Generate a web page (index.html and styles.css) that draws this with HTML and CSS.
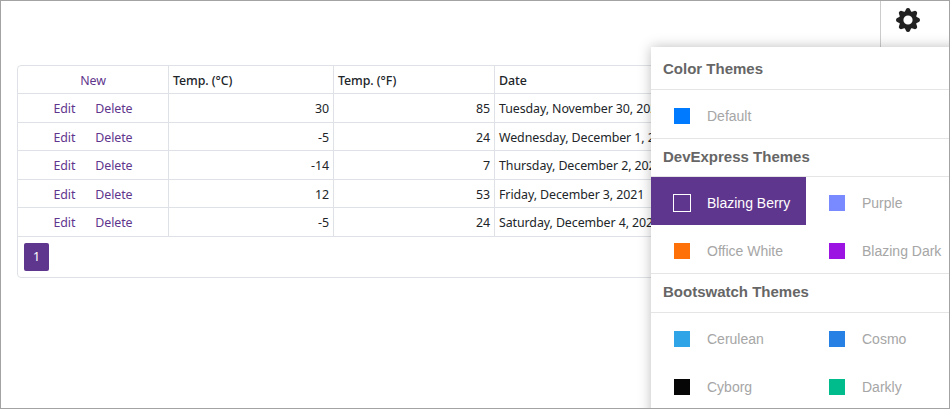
FILE: index.html
```html
<!DOCTYPE html>
<html lang="en">
<head>
<meta charset="utf-8">
<title>Weather forecast</title>
<link rel="stylesheet" href="styles.css">
</head>
<body>
<div class="frame">
  <header class="topbar">
    <button class="settings" aria-label="Themes">
      <svg width="24" height="24" viewBox="-12 -12 24 24">
        <g fill="#222">
          <path fill-rule="evenodd" d="M0-9A9 9 0 1 1 0 9A9 9 0 1 1 0-9ZM0-4.6A4.6 4.6 0 1 0 0 4.6A4.6 4.6 0 1 0 0-4.6Z"/>
          <path id="tooth" d="M-3.4-7.8L-2-10.8Q-1.5-12 0-12Q1.5-12 2-10.8L3.4-7.8Z"/>
          <use href="#tooth" transform="rotate(45)"/>
          <use href="#tooth" transform="rotate(90)"/>
          <use href="#tooth" transform="rotate(135)"/>
          <use href="#tooth" transform="rotate(180)"/>
          <use href="#tooth" transform="rotate(225)"/>
          <use href="#tooth" transform="rotate(270)"/>
          <use href="#tooth" transform="rotate(315)"/>
        </g>
      </svg>
    </button>
  </header>
  <main class="grid">
    <div class="row head"><div class="cmd"><a>New</a></div><div>Temp. (°C)</div><div>Temp. (°F)</div><div>Date</div></div>
    <div class="row"><div class="cmd"><a>Edit</a><a>Delete</a></div><div class="num">30</div><div class="num">85</div><div>Tuesday, November 30, 2021</div></div>
    <div class="row short"><div class="cmd"><a>Edit</a><a>Delete</a></div><div class="num">-5</div><div class="num">24</div><div>Wednesday, December 1, 2021</div></div>
    <div class="row"><div class="cmd"><a>Edit</a><a>Delete</a></div><div class="num">-14</div><div class="num">7</div><div>Thursday, December 2, 2021</div></div>
    <div class="row short"><div class="cmd"><a>Edit</a><a>Delete</a></div><div class="num">12</div><div class="num">53</div><div>Friday, December 3, 2021</div></div>
    <div class="row"><div class="cmd"><a>Edit</a><a>Delete</a></div><div class="num">-5</div><div class="num">24</div><div>Saturday, December 4, 2021</div></div>
    <div class="pager"><span class="page">1</span></div>
  </main>
  <aside class="themes">
    <h2 class="first">Color Themes</h2>
    <div class="list"><div class="item"><i class="swatch default"></i>Default</div></div>
    <h2>DevExpress Themes</h2>
    <div class="list">
      <div class="item selected"><i class="swatch berry"></i>Blazing Berry</div>
      <div class="item"><i class="swatch purple"></i>Purple</div>
      <div class="item"><i class="swatch office"></i>Office White</div>
      <div class="item"><i class="swatch dark"></i>Blazing Dark</div>
    </div>
    <h2 class="last">Bootswatch Themes</h2>
    <div class="list">
      <div class="item"><i class="swatch cerulean"></i>Cerulean</div>
      <div class="item"><i class="swatch cosmo"></i>Cosmo</div>
      <div class="item"><i class="swatch cyborg"></i>Cyborg</div>
      <div class="item"><i class="swatch darkly"></i>Darkly</div>
    </div>
  </aside>
</div>
</body>
</html>
```
FILE: styles.css
```css
* { box-sizing: border-box; }
body { margin: 0; background: #fff; }
.frame {
  position: relative;
  height: 409px;
  border: 1px solid #a3a3a3;
  overflow: hidden;
}
.topbar { display: flex; justify-content: flex-end; height: 64px; }
.settings {
  width: 69px;
  height: 64px;
  padding: 7px 0 0 15px;
  border: 0;
  border-left: 1px solid #ccc;
  background: none;
  text-align: left;
}
.settings svg { display: block; margin-bottom: 33px; }
.grid {
  width: 850px;
  height: 213px;
  margin-left: 16px;
  border: 1px solid #dee2e6;
  border-radius: 4px;
  font: 12.4px/28px "Noto Sans", sans-serif;
  letter-spacing: -0.08px;
  color: #212529;
}
.row {
  display: grid;
  grid-template-columns: 151px 165px 161px 1fr;
  grid-template-rows: 100%;
  height: 29px;
  border-bottom: 1px solid #dee2e6;
  line-height: 30px;
}
.row.head { height: 28px; font-weight: 500; }
.row.short { height: 28px; }
.row > div { padding: 0 4px; border-right: 1px solid #dee2e6; white-space: nowrap; }
.row > .cmd { display: flex; justify-content: center; gap: 20px; padding: 0; font-weight: 400; color: #5f368d; }
.row > .num { text-align: right; }
.pager { padding: 6px; }
.page {
  display: block;
  width: 25px;
  height: 28px;
  border-radius: 2px;
  background: #5f368d;
  color: #fff;
  text-align: center;
}
.themes {
  position: absolute;
  left: 650px;
  top: 46px;
  width: 310px;
  height: 380px;
  background: #fff;
  box-shadow: 0 0 12px rgba(0, 0, 0, .26);
  font: 14px/16px "Liberation Sans", sans-serif;
  color: #a6a6a6;
}
.themes h2 {
  height: 38px;
  margin: 0;
  padding-left: 12px;
  border-bottom: 1px solid #e5e5e5;
  font-size: 15px;
  font-weight: 700;
  line-height: 36px;
  color: #666;
}
.themes h2.first { height: 43px; line-height: 44px; }
.themes h2.last { height: 39px; }
.list { display: grid; grid-template-columns: 155px 155px; border-bottom: 1px solid #e5e5e5; }
.item { display: flex; align-items: center; height: 48px; padding: 4px 0 0 23px; white-space: nowrap; }
.item.selected { background: #5f368d; color: #fff; }
.swatch { width: 16px; height: 16px; margin-right: 17px; }
.berry { width: 18px; height: 18px; margin: 0 16px 0 -1px; border: 1px solid #fff; }
.default { background: #007bff; }
.purple { background: #7989ff; }
.office { background: #fe7109; }
.dark { background: #9c14e2; }
.cerulean { background: #2fa4e7; }
.cosmo { background: #2780e3; }
.cyborg { background: #060606; }
.darkly { background: #00bc8c; }
```
